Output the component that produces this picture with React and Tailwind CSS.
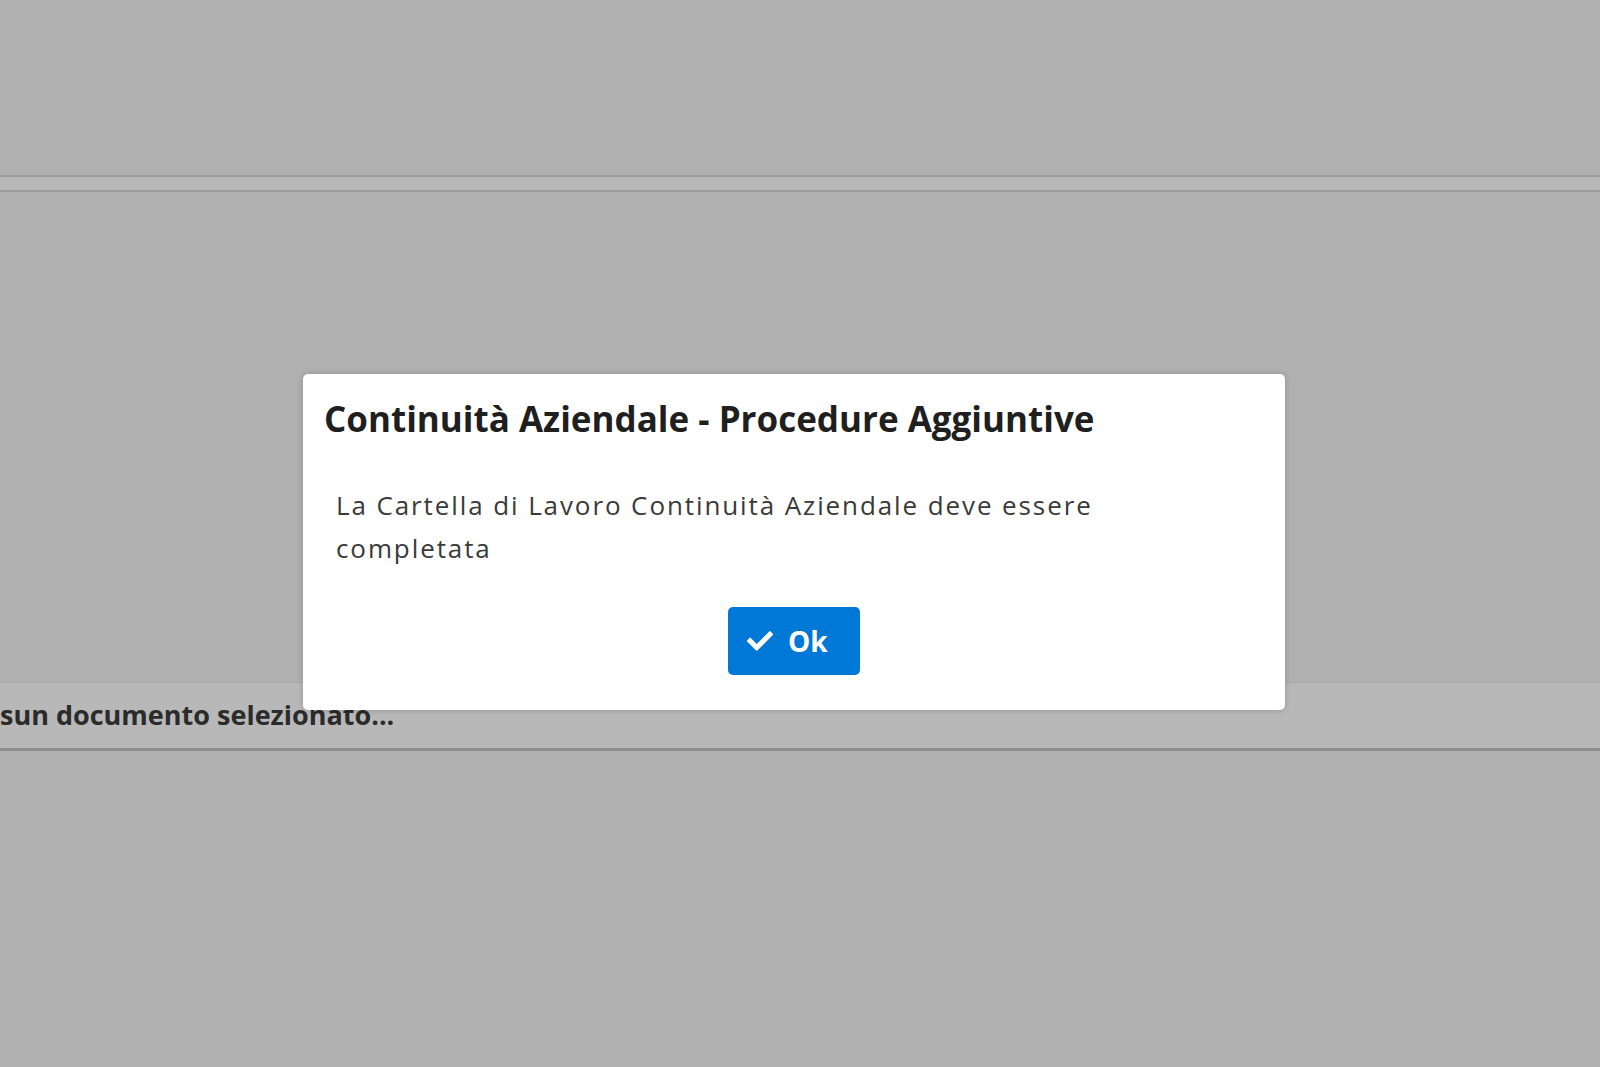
import React from "react";
import { FaCheck } from "react-icons/fa";

export default function App() {
  return (
    <div
      className="relative h-[1067px] w-[1600px] overflow-hidden bg-[#b0b0b0]"
      style={{ fontFamily: '"Open Sans", "Noto Sans", sans-serif' }}
    >
      <div className="h-[175px]" />
      <div className="h-[2px] bg-[#9c9c9c]" />
      <div className="h-[13px] bg-[#b8b8b8]" />
      <div className="h-[2px] bg-[#9c9c9c]" />
      <div className="h-[490px]" />
      <div className="flex h-[66px] items-center border-t border-[#a9a9a9] bg-[#b8b8b8]">
        <span className="text-[27px] font-bold text-[#2b2b2b]">
          sun documento selezionato...
        </span>
      </div>
      <div className="h-[3px] bg-[#8e8e8e]" />

      <div className="absolute left-[303px] top-[374px] flex w-[982px] flex-col rounded-[5px] bg-white pb-[35px] pt-[24px] shadow-[0_0_6px_rgba(0,0,0,0.18)]">
        <h1 className="pl-[21px] text-[35px] font-bold leading-[41px] text-[#1f1f1f]">
          Continuità Aziendale - Procedure Aggiuntive
        </h1>
        <p className="mt-[45px] pl-[33px] text-[26px] leading-[43px] tracking-[1.9px] text-[#3a3a3a]">
          La Cartella di Lavoro Continuità Aziendale deve essere
          <br />
          completata
        </p>
        <div className="mt-[37px] flex justify-center">
          <button className="flex h-[68px] w-[132px] items-center gap-[14px] rounded-[5px] bg-[#0078d7] pl-[18px] text-white">
            <FaCheck className="h-[26px] w-[28px]" />
            <span className="text-[28px] font-bold leading-none">Ok</span>
          </button>
        </div>
      </div>
    </div>
  );
}
